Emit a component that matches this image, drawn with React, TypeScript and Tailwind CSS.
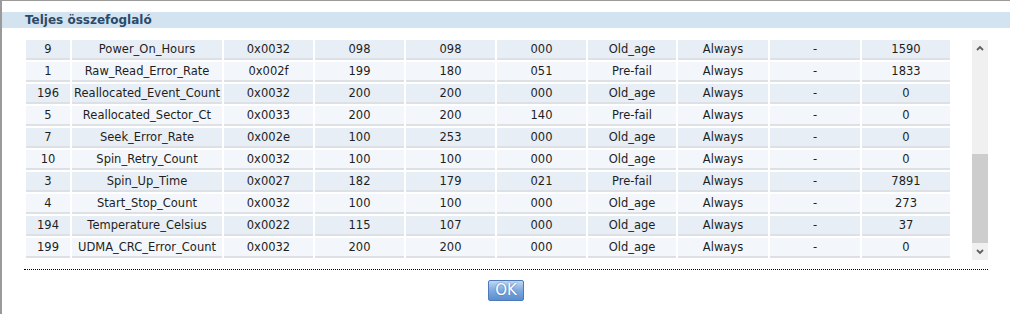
const rows: string[][] = [
  ["9", "Power_On_Hours", "0x0032", "098", "098", "000", "Old_age", "Always", "-", "1590"],
  ["1", "Raw_Read_Error_Rate", "0x002f", "199", "180", "051", "Pre-fail", "Always", "-", "1833"],
  ["196", "Reallocated_Event_Count", "0x0032", "200", "200", "000", "Old_age", "Always", "-", "0"],
  ["5", "Reallocated_Sector_Ct", "0x0033", "200", "200", "140", "Pre-fail", "Always", "-", "0"],
  ["7", "Seek_Error_Rate", "0x002e", "100", "253", "000", "Old_age", "Always", "-", "0"],
  ["10", "Spin_Retry_Count", "0x0032", "100", "100", "000", "Old_age", "Always", "-", "0"],
  ["3", "Spin_Up_Time", "0x0027", "182", "179", "021", "Pre-fail", "Always", "-", "7891"],
  ["4", "Start_Stop_Count", "0x0032", "100", "100", "000", "Old_age", "Always", "-", "273"],
  ["194", "Temperature_Celsius", "0x0022", "115", "107", "000", "Old_age", "Always", "-", "37"],
  ["199", "UDMA_CRC_Error_Count", "0x0032", "200", "200", "000", "Old_age", "Always", "-", "0"],
];

const widths = ["w-[44px]", "w-[150px]", "w-[89px]", "w-[89px]", "w-[89px]", "w-[89px]", "w-[88px]", "w-[90px]", "w-[90px]", "w-[88px]"];

function Chevron({ up }: { up?: boolean }) {
  return (
    <svg width="8" height="6" viewBox="0 0 8 6" className="text-[#606060]">
      <path d={up ? "M1 5 L4 2 L7 5" : "M1 1 L4 4 L7 1"} fill="none" stroke="currentColor" strokeWidth="1.8" />
    </svg>
  );
}

function Scrollbar() {
  return (
    <div className="mt-[2px] flex h-[220px] w-[16px] flex-col bg-[#f0f0f0]">
      <div className="flex h-[16px] items-center justify-center">
        <Chevron up />
      </div>
      <div className="flex-1" />
      <div className="h-[89px] bg-[#cdcdcd]" />
      <div className="flex h-[17px] items-center justify-center">
        <Chevron />
      </div>
    </div>
  );
}

export default function App() {
  return (
    <div className="h-[314px] w-[1010px] overflow-hidden border-l-2 border-t border-[#9a9a9a] bg-white font-['DejaVu_Sans',Verdana,sans-serif] text-[11.5px] text-[#1e1e1e]">
      <div className="mt-[11px] h-[16px] bg-[#d3e3ef] pl-[23px] text-[12px] font-bold leading-[16px] text-[#2c4a6a]">
        Teljes összefoglaló
      </div>
      <div className="ml-[22px] mt-[10px] flex w-[964px]">
        <div className="w-[948px]">
          <table className="table-fixed border-separate border-spacing-[2px]">
            <tbody>
              {rows.map((r, i) => (
                <tr key={i}>
                  {r.map((c, j) => (
                    <td
                      key={j}
                      className={`${widths[j]} h-[20px] border-b-2 border-[#dde1e6] p-0 pt-[1px] text-center leading-[17px] ${
                        i % 2 === 0 ? "bg-[#e7eef6]" : "bg-[#f3f7fb]"
                      }`}
                    >
                      {c}
                    </td>
                  ))}
                </tr>
              ))}
            </tbody>
          </table>
        </div>
        <Scrollbar />
      </div>
      <div className="ml-[22px] mt-[9px] w-[964px] border-b border-dotted border-black" />
      <div className="mt-[10px] flex justify-center">
        <button className="h-[21px] w-[36px] rounded-[2px] border border-[#4d7bb9] bg-gradient-to-b from-[#c2d8f2] via-[#7eaadf] to-[#5b8dcd] text-[15px] leading-[19px] text-white [text-shadow:0_0_2px_#3a6aa8]">
          OK
        </button>
      </div>
    </div>
  );
}
